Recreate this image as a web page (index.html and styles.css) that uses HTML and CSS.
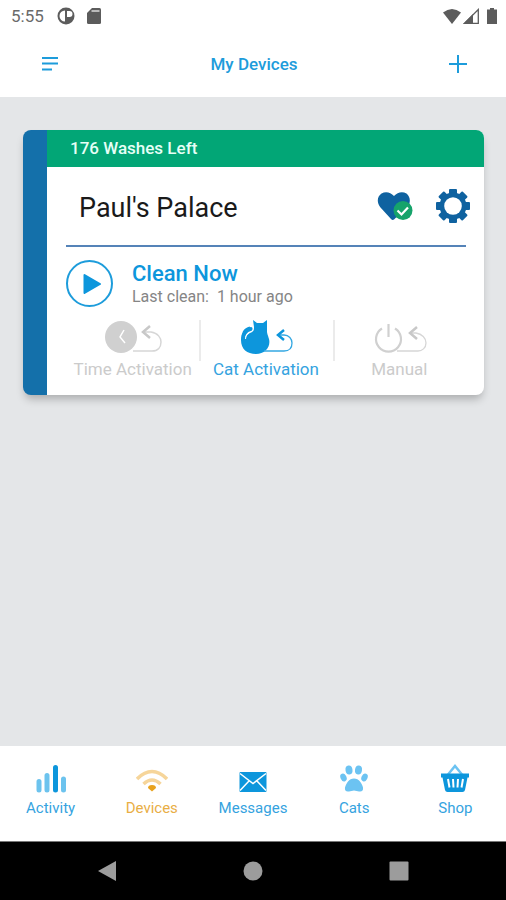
FILE: index.html
```html
<!DOCTYPE html>
<html lang="en">
<head>
  <meta charset="UTF-8" />
  <meta name="viewport" content="width=device-width, initial-scale=1.0" />
  <title>My Devices</title>
  <link rel="stylesheet" href="styles.css">
</head>
<body>
  <div class="status-bar">
    <span class="time">5:55</span>
    <svg width="18" height="18" viewBox="0 0 18 18">
      <circle cx="9" cy="9" r="8.500" fill="#5c5c5c" />
      <path d="M8 3.500v11a5.500 5.500 0 0 1 0-11zM10 4h2.500a2.500 2.500 0 0 1 0 6H10z" fill="#fff" />
    </svg>
    <svg class="sd" width="14" height="16" viewBox="0 0 14 16">
      <path d="M5 0h7.500Q14 0 14 1.500v13q0 1.500-1.500 1.500h-11Q0 16 0 14.500V5z" fill="#5c5c5c" />
      <path d="M4.500 3h8" stroke="#bbb" stroke-width="2" />
    </svg>
    <span class="spacer"></span>
    <svg width="18" height="15" viewBox="0 0 18 15">
      <path d="M0 3.500Q9-3.500 18 3.500L9 15z" fill="#5c5c5c" />
    </svg>
    <svg class="signal" width="16" height="16" viewBox="0 0 16 16">
      <path d="M15.300 1.500V15.300H1.500z" fill="none" stroke="#5c5c5c" stroke-width="1.300" />
      <path d="M10 6v10H0z" fill="#5c5c5c" />
    </svg>
    <svg width="10" height="16" viewBox="0 0 10 16">
      <path d="M3 0h4v1.500h3V16H0V1.500h3z" fill="#5c5c5c" />
    </svg>
  </div>

  <header class="header">
    <button class="icon-button" aria-label="Menu">
      <svg width="18" height="16" viewBox="0 0 18 16">
        <path d="M1 2h16M1 7.500h16M1 13.500h10" stroke="#1d9cdb" stroke-width="2" />
      </svg>
    </button>
    <h1>My Devices</h1>
    <button class="icon-button" aria-label="Add device">
      <svg width="18" height="18" viewBox="0 0 18 18">
        <path d="M9 0v18M0 9h18" stroke="#1d9cdb" stroke-width="2" />
      </svg>
    </button>
  </header>

  <main class="content">
    <section class="card">
      <div class="banner">176 Washes Left</div>
      <div class="card-body">
        <div class="name-row">
          <h2>Paul's Palace</h2>
          <button class="icon-button" aria-label="Health">
            <svg width="36" height="30" viewBox="0 0 36 30">
              <path d="M17 28.500q-1.500 1-3-.5L3.500 16.500C-.5 12 0 5.500 4.500 2.500 8.500 0 13.500 1 17 5 20.500 1 25.500 0 29.500 2.500 33.500 5.500 34 12 30.500 15.500z" fill="#0f62a0" />
              <circle cx="26" cy="19.500" r="9.500" fill="#16a36b" />
              <path d="M20.500 19.500l4 4 6.500-7" fill="none" stroke="#fff" stroke-width="2.200" />
            </svg>
          </button>
          <button class="icon-button" aria-label="Settings">
            <svg width="36" height="36" viewBox="-18 -18 36 36">
              <g fill="#0f62a0">
                <rect x="-4" y="-17" width="8" height="34" rx="1" />
                <rect x="-4" y="-17" width="8" height="34" rx="1" transform="rotate(45)" />
                <rect x="-4" y="-17" width="8" height="34" rx="1" transform="rotate(90)" />
                <rect x="-4" y="-17" width="8" height="34" rx="1" transform="rotate(135)" />
                <circle r="13.500" />
              </g>
              <circle r="8.800" fill="#fff" />
            </svg>
          </button>
        </div>

        <div class="clean-row">
          <button class="play" aria-label="Clean now">
            <svg width="18" height="20" viewBox="0 0 18 20">
              <path d="M1.500 1L17 10 1.500 19z" fill="#0d96dc" stroke="#0d96dc" stroke-width="2" stroke-linejoin="round" />
            </svg>
          </button>
          <div>
            <h3>Clean Now</h3>
            <p>Last clean:&nbsp; 1 hour ago</p>
          </div>
        </div>

        <div class="modes">
          <button class="mode">
            <svg width="60" height="36" viewBox="0 0 60 36">
              <circle cx="18" cy="17" r="16" fill="#d0d0d0" />
              <path d="M21 10l-4 7 5 6" fill="none" stroke="#fff" stroke-width="1.500" />
              <path d="M39 12H48C55 13 58 18 58 22 58 27 55 31 49 31H30" fill="none" stroke="#d6d6d6" stroke-width="1.500" />
              <path d="M47 6l-7 6 7 6" fill="none" stroke="#c8c8c8" stroke-width="2.500" />
            </svg>
            Time Activation
          </button>
          <button class="mode active">
            <svg width="60" height="36" viewBox="0 0 60 36">
              <path d="M17 0l4 3h6l4-3v11c0 3 1 4 2 8 2 8-4 15-13 15S5 29 5 20C5 14 9 8 15 7c2 0 2 3 0 4-4 1-6 4-6 8 2-5 5-6 7-7 2-1 2-3 2-5z" fill="#0d96dc" />
              <path d="M14 8c-5 1-8 6-7 12" fill="none" stroke="#0d96dc" stroke-width="3" />
              <path d="M14.500 12c-3 1-5 4-5 7" fill="none" stroke="#fff" stroke-width="1" />
              <path d="M41 15H48C53 15 56 19 56 23 56 28 53 31 48 31H28" fill="none" stroke="#35a8e2" stroke-width="1.300" />
              <path d="M48 10l-6 5 6 5" fill="none" stroke="#0d96dc" stroke-width="2.500" />
            </svg>
            Cat Activation
          </button>
          <button class="mode">
            <svg width="60" height="36" viewBox="0 0 60 36">
              <path d="M13 8.500a12.500 12.500 0 1 0 13 0M19.500 4v13" fill="none" stroke="#d0d0d0" stroke-width="2.200" />
              <path d="M40 13H47C53 14 57 18 57 23 57 28 53 31 49 31H28" fill="none" stroke="#d6d6d6" stroke-width="1.300" />
              <path d="M48 7l-7 6 7 6" fill="none" stroke="#c8c8c8" stroke-width="2.500" />
            </svg>
            Manual
          </button>
        </div>
      </div>
    </section>
  </main>

  <nav class="tabs">
    <a href="#">
      <svg width="32" height="30" viewBox="0 0 32 30">
        <path d="M4 18.500V27M12 12.500V27M28.500 16V27" stroke="#6cc3ee" stroke-width="5" stroke-linecap="round" />
        <path d="M20.500 4.500V27" stroke="#0d96dc" stroke-width="5" stroke-linecap="round" />
      </svg>
      Activity
    </a>
    <a href="#" class="current">
      <svg width="32" height="30" viewBox="0 0 32 30">
        <path d="M1 16Q16 1 31 16M7.500 21Q16 13 24.500 21" fill="none" stroke="#f6d59a" stroke-width="3.500" />
        <path d="M16 28.500l-4-3.500q0-3 4-3t4 3z" fill="#e8a21c" />
      </svg>
      Devices
    </a>
    <a href="#">
      <svg width="32" height="30" viewBox="0 0 32 30">
        <rect x="2.500" y="9" width="27" height="20" rx="1" fill="#0d96dc" />
        <path d="M3 10.500l13 10 13-10M3 27.500l9-9.500M29 27.500L20 18" fill="none" stroke="#fff" stroke-width="1.500" />
      </svg>
      Messages
    </a>
    <a href="#">
      <svg width="32" height="30" viewBox="0 0 32 30">
        <g fill="#6cc3f2">
          <ellipse cx="11" cy="7" rx="3.500" ry="4.500" transform="rotate(-8 11 7)" />
          <ellipse cx="20.500" cy="7" rx="3.500" ry="4.500" transform="rotate(8 20.500 7)" />
          <ellipse cx="5.500" cy="14.500" rx="3" ry="4" transform="rotate(-25 5.500 14.500)" />
          <ellipse cx="26.500" cy="14.500" rx="3" ry="4" transform="rotate(25 26.500 14.500)" />
          <path d="M16 15.500c5 0 8 5 9 9 .5 3-1 4.500-4 4l-5-1-5 1c-3 .5-4.500-1-4-4 1-4 4-9 9-9z" />
        </g>
      </svg>
      Cats
    </a>
    <a href="#">
      <svg width="32" height="30" viewBox="0 0 32 30">
        <path d="M9 11.500L16 3l7 8.500" fill="none" stroke="#6cc3f2" stroke-width="2.500" />
        <path d="M2 10.500h28v4h-1.500L26 27q-.5 2-2.500 2h-15Q6.500 29 6 27L3.500 14.500H2z" fill="#0d96dc" />
        <path d="M9 16l1.500 8.500M14 16l.5 8.500M19 16l-.5 8.500M24 16l-1.500 8.500" stroke="#fff" stroke-width="2" />
      </svg>
      Shop
    </a>
  </nav>

  <div class="system-nav">
    <button aria-label="Back">
      <svg width="20" height="20" viewBox="0 0 20 20"><path d="M19 0v20L1 10z" fill="#9c9c9c" /></svg>
    </button>
    <button aria-label="Home">
      <svg width="20" height="20" viewBox="0 0 20 20"><circle cx="10" cy="10" r="9.500" fill="#9c9c9c" /></svg>
    </button>
    <button aria-label="Recent apps">
      <svg width="20" height="20" viewBox="0 0 20 20"><rect width="19" height="19" x=".5" y=".5" rx="1" fill="#9c9c9c" /></svg>
    </button>
  </div>
</body>
</html>
```
FILE: styles.css
```css
* {
  box-sizing: border-box;
}

body {
  margin: 0;
  min-height: 100vh;
  display: flex;
  flex-direction: column;
  font-family: Roboto, "Liberation Sans", sans-serif;
  background: #fff;
}

h1, h2, h3, p {
  margin: 0;
}

button {
  padding: 0;
  border: none;
  background: none;
  font-family: inherit;
  cursor: pointer;
}

svg {
  display: block;
  flex: none;
}

.status-bar {
  display: flex;
  align-items: center;
  height: 32px;
  padding: 0 9px 0 11px;
}

.time {
  width: 46px;
  font-size: 17px;
  color: #6a6a6a;
}

.sd {
  margin-left: 12px;
}

.spacer {
  flex: 1;
}

.signal {
  margin: 0 8px 0 2px;
}

.header {
  display: flex;
  align-items: center;
  justify-content: space-between;
  height: 65px;
  padding: 0 39px 2px 41px;
}

.header h1 {
  font-size: 17px;
  font-weight: 500;
  color: #1d9cdb;
}

.content {
  flex: 1;
  padding: 33px 22px 33px 23px;
  background: #e4e6e8;
}

.card {
  overflow: hidden;
  border-left: 24px solid #1470aa;
  border-radius: 8px;
  background: #fff;
  box-shadow: 0 6px 8px -2px rgba(0, 0, 0, 0.25);
}

.banner {
  padding: 0 23px;
  font-size: 17px;
  font-weight: 500;
  line-height: 37px;
  color: #e6fff6;
  background: #02a676;
}

.card-body {
  padding: 0 18px 16px 19px;
}

.name-row {
  display: flex;
  align-items: center;
  gap: 22px;
  height: 78px;
  margin-right: -5px;
  padding-left: 13px;
}

.name-row h2 {
  flex: 1;
  padding-top: 3px;
  font-size: 27px;
  font-weight: 400;
  color: #1a1a1a;
}

.clean-row {
  display: flex;
  align-items: center;
  gap: 19px;
  padding: 13px 0;
  border-top: 2px solid #5583b8;
}

.play {
  display: flex;
  align-items: center;
  justify-content: center;
  width: 47px;
  height: 47px;
  padding-left: 4px;
  border: 2px solid #1d9cdb;
  border-radius: 50%;
}

.clean-row h3 {
  font-size: 22px;
  font-weight: 500;
  line-height: 26px;
  color: #0d96dc;
}

.clean-row p {
  font-size: 16px;
  line-height: 20px;
  color: #858585;
}

.modes {
  display: grid;
  grid-template-columns: 1fr 1fr 1fr;
}

.mode {
  position: relative;
  display: flex;
  flex-direction: column;
  align-items: center;
  gap: 3px;
  font-size: 17px;
  line-height: 20px;
  color: #cbcbcb;
  white-space: nowrap;
}

.mode.active {
  color: #35a3e0;
}

.mode + .mode::before {
  content: "";
  position: absolute;
  left: 0;
  top: 0;
  width: 2px;
  height: 41px;
  background: #ebebeb;
}

.tabs {
  display: grid;
  grid-template-columns: repeat(5, 1fr);
  height: 95px;
  padding-top: 17px;
}

.tabs a {
  display: flex;
  flex-direction: column;
  align-items: center;
  gap: 5px;
  font-size: 15px;
  line-height: 20px;
  color: #35a3e0;
  text-decoration: none;
}

.tabs a.current {
  color: #e9ae45;
}

.system-nav {
  display: flex;
  align-items: center;
  justify-content: center;
  gap: 126px;
  height: 59px;
  border-top: 1px solid #777;
  background: #000;
}
```
